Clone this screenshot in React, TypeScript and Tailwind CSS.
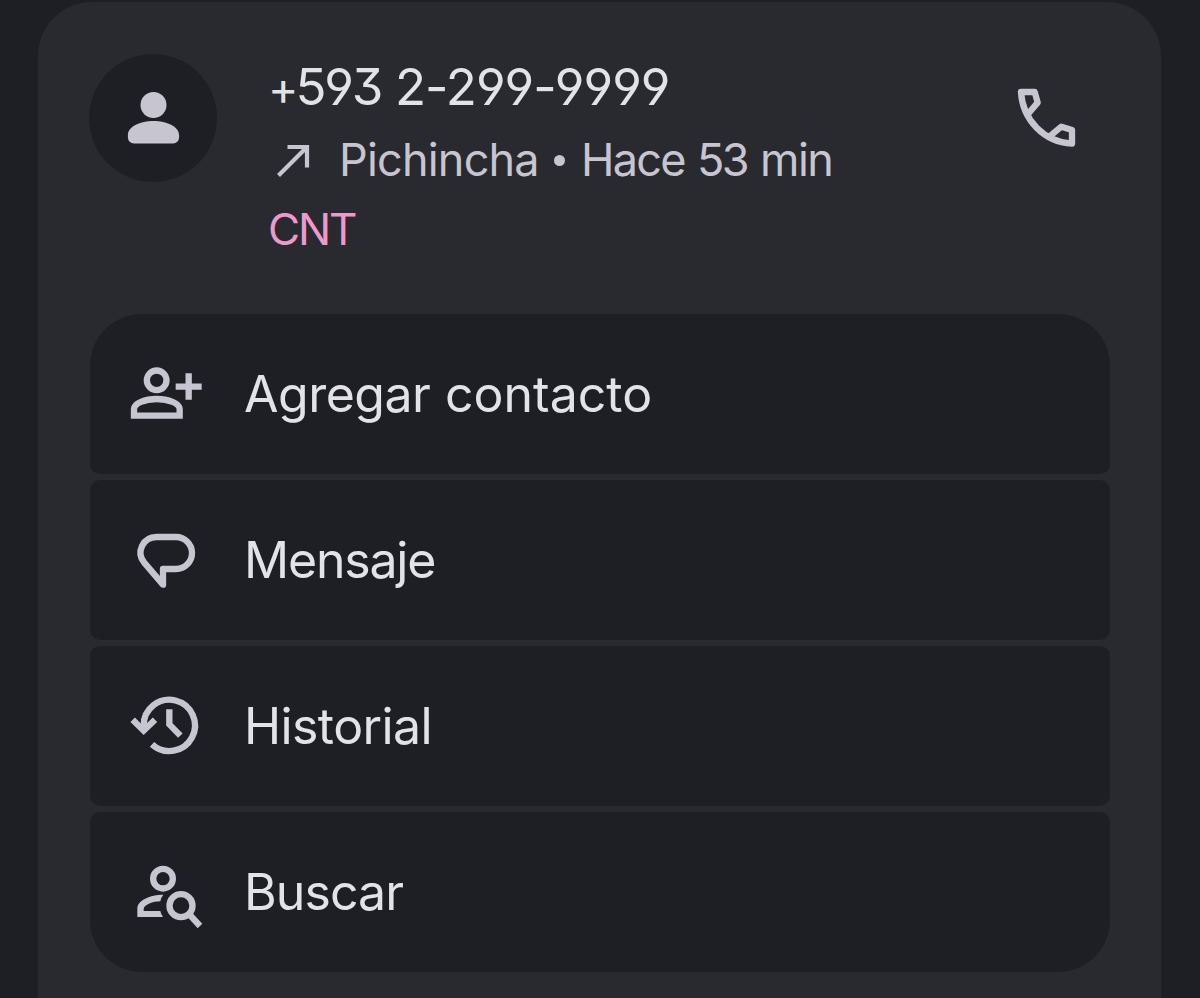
import type { ReactNode } from "react";
import { clsx } from "clsx";

function PersonIcon() {
  return (
    <svg width="60" height="60" viewBox="0 0 60 60" fill="currentColor">
      <circle cx="30.500" cy="17" r="13" />
      <path d="M4.900 47C4.900 38.500 17.500 33 30.500 33S56.100 38.500 56.100 47V49.500a6 6 0 0 1-6 6H10.900a6 6 0 0 1-6-6Z" />
    </svg>
  );
}

function OutgoingIcon() {
  return (
    <svg width="36" height="36" viewBox="0 0 36 36" fill="none" stroke="currentColor" strokeWidth="4.200">
      <path d="M11.500 6H31V26.500M31 6L2.500 34.500" />
    </svg>
  );
}

function CallIcon() {
  return (
    <svg width="100" height="90" viewBox="0 0 300 270" fill="none" stroke="currentColor" strokeWidth="19" strokeLinejoin="round">
      <path d="M84 132L113 98L104 66H63C68 150 132 216 216 221V180L184 170L148 200" />
    </svg>
  );
}

function AddPersonIcon() {
  return (
    <svg width="100" height="90" viewBox="0 0 300 270" fill="none" stroke="currentColor" strokeWidth="19">
      <circle cx="110" cy="91" r="29.500" />
      <path d="M42 197V177C42 160 75 147 110 147S179 160 179 177V197Z" />
      <path d="M206 70V149M167 110H245" />
    </svg>
  );
}

function MessageIcon() {
  return (
    <svg width="100" height="80" viewBox="0 0 300 240" fill="none" stroke="currentColor" strokeWidth="19" strokeLinejoin="round">
      <path d="M110 51H168A48 48 0 0 1 168 147H129V194L72 127C48 97 68 51 110 51Z" />
    </svg>
  );
}

function HistoryIcon() {
  return (
    <svg width="100" height="90" viewBox="0 0 300 270" fill="none" stroke="currentColor" strokeWidth="19">
      <path d="M71 150V137A77 77 0 1 1 96 193" />
      <path d="M38 119L71 152L105 119" />
      <path d="M148 88V133L181 167" />
    </svg>
  );
}

function SearchPersonIcon() {
  return (
    <svg width="100" height="90" viewBox="0 0 300 270" fill="none" stroke="currentColor" strokeWidth="19">
      <circle cx="129" cy="86" r="29.500" />
      <path
        d="M52 201V176C52 151 90 134 130 134Q122 144 121 154C100 154 71 164 71 178V183H121Q123 193 129 201Z"
        fill="currentColor"
        stroke="none"
      />
      <circle cx="183" cy="167" r="34.500" />
      <path d="M206 191L240 228" />
    </svg>
  );
}

interface ActionRowProps {
  icon: ReactNode;
  className?: string;
  iconClassName: string;
  children: ReactNode;
}

function ActionRow({ icon, className, iconClassName, children }: ActionRowProps) {
  return (
    <button
      className={clsx(
        "flex h-40 w-full items-start overflow-hidden rounded-[10px] bg-[#1e1f24] pl-[30px] text-left",
        className
      )}
    >
      <span className={clsx("w-[124px] shrink-0 text-[#c7c5d0]", iconClassName)}>{icon}</span>
      <span className="flex pt-[50px] text-[50px] leading-[60px] whitespace-nowrap text-[#e3e2e9]">{children}</span>
    </button>
  );
}

export default function App() {
  return (
    <div className="h-[998px] overflow-hidden bg-[#1e1f24] pr-[39px] pl-[38px] pt-0.5 font-['Inter',sans-serif] font-normal">
      <section className="h-[1100px] rounded-t-[54px] bg-[#292a2f] pr-[51px] pl-[52px]">
        <header className="flex h-[312px] items-start">
          {/* Avatar */}
          <div className="mt-[52px] -ml-px flex size-32 shrink-0 items-center justify-center rounded-full bg-[#1e1f24] text-[#c7c5d0]">
            <PersonIcon />
          </div>

          {/* Number, location and carrier */}
          <div className="ml-[51px] w-[600px] whitespace-nowrap">
            <h1 className="mt-[55px] flex h-[60px] text-[51px] leading-[60px] text-[#e3e2e9] [font-feature-settings:'cv04','ss01']">
              <span className="w-[127px] tracking-[-2.200px]">
                <span className="text-[46px] tracking-[-3px]">+</span>593
              </span>
              <span className="tracking-[-1px]">2-299-9999</span>
            </h1>
            <div className="mt-[13px] flex h-[60px] text-[45px] leading-[60px] text-[#c7c5d0]">
              <span className="w-[71px] pt-[11px] pl-[8px]">
                <OutgoingIcon />
              </span>
              <span className="w-[215px] tracking-[-0.800px]">Pichincha</span>
              <span className="flex w-[27px] items-center">
                <span className="size-[11px] rounded-full bg-[#c7c5d0]" />
              </span>
              <span className="w-[116px] tracking-[-1.700px]">Hace</span>
              <span className="w-[63px] tracking-[-2.500px]">53</span>
              <span className="tracking-[-1.500px]">min</span>
            </div>
            <p className="mt-[9px] text-[44px] leading-[60px] tracking-[-2.200px] text-[#ee99cb]">CNT</p>
          </div>

          <button className="mt-[68px] ml-[132px] shrink-0 text-[#c7c5d0]">
            <CallIcon />
          </button>
        </header>

        {/* Actions */}
        <div className="flex flex-col gap-1.5">
          <ActionRow icon={<AddPersonIcon />} iconClassName="pt-9" className="rounded-t-[52px]">
            <span className="w-[201px] tracking-[-0.500px]">Agregar</span>
            <span>contacto</span>
          </ActionRow>
          <ActionRow icon={<MessageIcon />} iconClassName="pt-10">
            <span className="tracking-[-1.200px]">Mensaje</span>
          </ActionRow>
          <ActionRow icon={<HistoryIcon />} iconClassName="pt-[34px]">
            <span className="tracking-[-0.600px]">Historial</span>
          </ActionRow>
          <ActionRow icon={<SearchPersonIcon />} iconClassName="pt-[38px]" className="rounded-b-[52px]">
            <span className="tracking-[-0.900px]">Buscar</span>
          </ActionRow>
        </div>
      </section>
    </div>
  );
}
